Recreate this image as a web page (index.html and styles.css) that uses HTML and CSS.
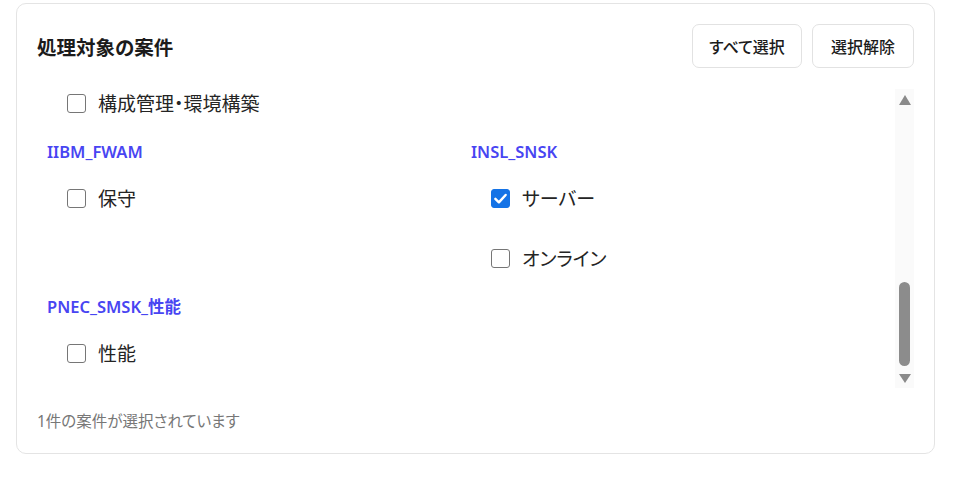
FILE: index.html
```html
<!DOCTYPE html>
<html lang="ja">
<head>
<meta charset="utf-8">
<title>処理対象の案件</title>
<link rel="stylesheet" href="styles.css">
</head>
<body>
<section class="card">
  <header class="card-head">
    <h2 class="card-title">処理対象の案件</h2>
    <div class="actions">
      <button class="btn" type="button">すべて選択</button>
      <button class="btn" type="button">選択解除</button>
    </div>
  </header>

  <div class="scroll">
    <div class="viewport">
      <div class="groups">
        <div class="group partial">
          <ul class="items">
            <li class="item"><span class="box"></span><span class="label">構成管理・環境構築</span></li>
          </ul>
        </div>
        <div class="group partial"></div>

        <div class="group">
          <h3 class="group-title">IIBM_FWAM</h3>
          <ul class="items">
            <li class="item"><span class="box"></span><span class="label">保守</span></li>
          </ul>
        </div>
        <div class="group">
          <h3 class="group-title">INSL_SNSK</h3>
          <ul class="items">
            <li class="item"><span class="box checked"><svg viewBox="0 0 20 20" width="20" height="20"><path d="M4.6 10.4 8.3 14 15.4 6.3" fill="none" stroke="#fff" stroke-width="2.6" stroke-linecap="round" stroke-linejoin="round"/></svg></span><span class="label">サーバー</span></li>
            <li class="item"><span class="box"></span><span class="label">オンライン</span></li>
          </ul>
        </div>

        <div class="group">
          <h3 class="group-title">PNEC_SMSK_性能</h3>
          <ul class="items">
            <li class="item"><span class="box"></span><span class="label">性能</span></li>
          </ul>
        </div>
        <div class="group"></div>
      </div>
    </div>
    <div class="scrollbar">
      <span class="arrow up"></span>
      <div class="track"><span class="thumb" style="margin-top:177px"></span></div>
      <span class="arrow down"></span>
    </div>
  </div>

  <p class="status">1件の案件が選択されています</p>
</section>
</body>
</html>
```

FILE: styles.css
```css
* { box-sizing: border-box; }

html, body {
  margin: 0;
  background: #ffffff;
}

body {
  padding: 3px 0 0 16px;
  font-family: "Noto Sans", "Noto Sans CJK JP", sans-serif;
  font-feature-settings: "palt";
  color: #222222;
}

.card {
  width: 919px;
  height: 451px;
  border: 1px solid #e4e4e4;
  border-radius: 10px;
  padding: 20px 20px 20px 20px;
  display: flex;
  flex-direction: column;
}

.card-head {
  display: flex;
  align-items: center;
  justify-content: space-between;
  height: 44px;
  margin-bottom: 20px;
}

.card-title {
  margin: 0;
  font-size: 19.5px;
  font-weight: 700;
  color: #1b1b1b;
}

.actions {
  display: flex;
  gap: 10px;
}

.btn {
  height: 44px;
  padding: 0 14px;
  border: 1px solid #e2e2e2;
  border-radius: 7px;
  background: #ffffff;
  font-family: inherit;
  font-feature-settings: "palt";
  font-size: 16px;
  font-weight: 500;
  color: #1b1b1b;
}

.btn:first-child { width: 110px; }
.btn:last-child { width: 102px; }

.scroll {
  display: flex;
  height: 300px;
}

.viewport {
  flex: 1;
  overflow: hidden;
  padding-left: 10px;
}

.groups {
  display: grid;
  grid-template-columns: 424px 424px;
  row-gap: 23px;
  margin-top: 1px;
}

.group-title {
  margin: 0;
  height: 24px;
  line-height: 24px;
  font-size: 16.5px;
  font-weight: 600;
  color: #4845f2;
}

.items {
  list-style: none;
  margin: 20px 0 0;
  padding: 0 0 0 20px;
  display: flex;
  flex-direction: column;
  gap: 32px;
}

.group.partial .items { margin-top: 0; }

.item {
  display: flex;
  align-items: center;
  height: 28px;
  gap: 12px;
}

.box {
  width: 19px;
  height: 19px;
  border: 1.5px solid #767676;
  border-radius: 3px;
  background: #ffffff;
  flex: none;
  display: flex;
  align-items: center;
  justify-content: center;
}

.box.checked {
  background: #1473e6;
  border-color: #1473e6;
}

.box svg { width: 19px; height: 19px; flex: none; }

.label {
  font-size: 19px;
  color: #242424;
}

.scrollbar {
  width: 19px;
  margin-top: 1px;
  background: #fafafa;
  display: flex;
  flex-direction: column;
  align-items: center;
}

.arrow {
  width: 0;
  height: 0;
  border-left: 6.5px solid transparent;
  border-right: 6.5px solid transparent;
  flex: none;
}

.arrow.up {
  margin-top: 6px;
  border-bottom: 10px solid #8a8a8a;
}

.arrow.down {
  margin-bottom: 5px;
  border-top: 9px solid #8a8a8a;
}

.track {
  flex: 1;
  width: 100%;
  display: flex;
  flex-direction: column;
  align-items: center;
}

.thumb {
  width: 11px;
  height: 84px;
  border-radius: 6px;
  background: #8c8c8c;
}

.status {
  margin: 21px 0 0;
  font-size: 15.5px;
  line-height: 24px;
  color: #777777;
}
```
